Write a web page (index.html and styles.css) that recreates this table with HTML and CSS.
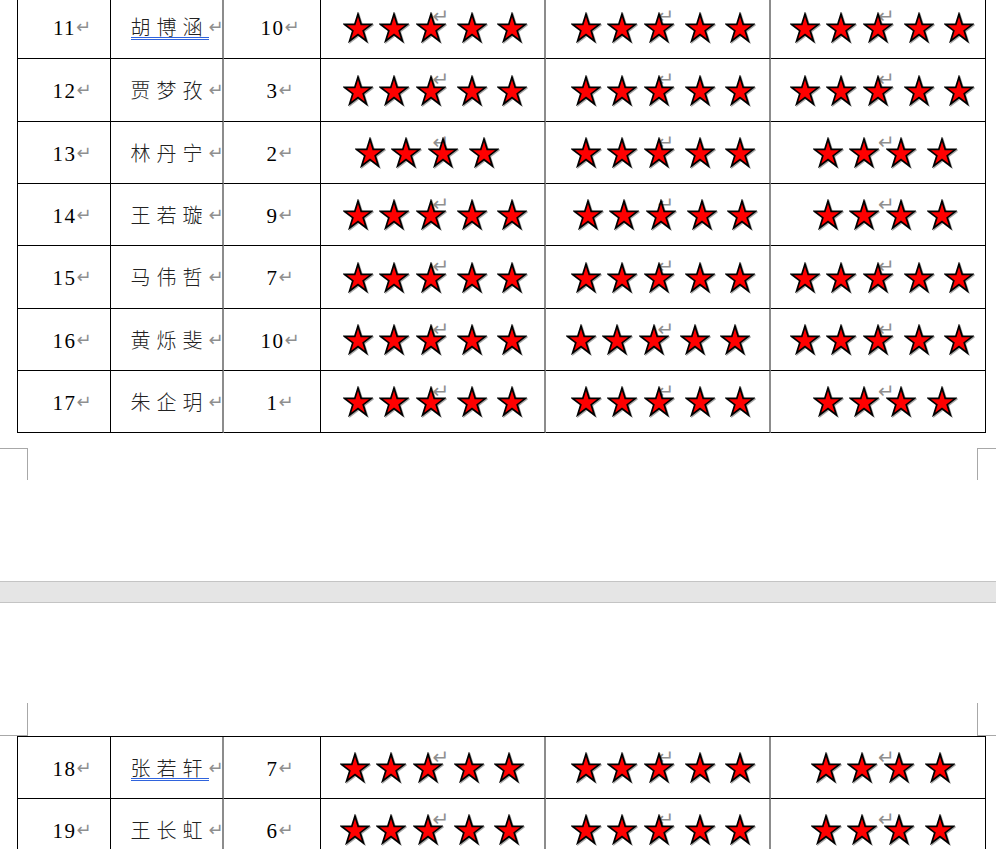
FILE: index.html
```html
<!DOCTYPE html>
<html lang="zh-CN">
<head>
  <meta charset="UTF-8">
  <meta name="viewport" content="width=device-width, initial-scale=1.0">
  <title>评分表</title>
  <link rel="stylesheet" href="styles.css">
</head>
<body>
  <svg class="defs" aria-hidden="true">
    <symbol id="st" viewBox="0 0 30 31">
      <polygon points="15,2 18.2,12.3 28.5,12.3 20.2,18.7 23.4,29 15,22.6 6.6,29 9.8,18.7 1.5,12.3 11.8,12.3" fill="#ff0000" stroke="#000" stroke-width="1.7" stroke-linejoin="miter"/>
    </symbol>
  </svg>

  <div class="sheet p1">
    <!-- 11 -->
    <div class="cell tn"><span class="num">11</span><span class="pm">↵</span></div>
    <div class="cell g tm"><span class="name u">胡博涵</span><span class="pm">↵</span></div>
    <div class="cell tn"><span class="num">10</span><span class="pm">↵</span></div>
    <div class="cell g sc c4"><span class="pm top">↵</span><div class="stars"><svg class="star"><use href="#st"/></svg><svg class="star"><use href="#st"/></svg><svg class="star"><use href="#st"/></svg><svg class="star"><use href="#st"/></svg><svg class="star"><use href="#st"/></svg></div></div>
    <div class="cell g sc c5"><span class="pm top">↵</span><div class="stars"><svg class="star"><use href="#st"/></svg><svg class="star"><use href="#st"/></svg><svg class="star"><use href="#st"/></svg><svg class="star"><use href="#st"/></svg><svg class="star"><use href="#st"/></svg></div></div>
    <div class="cell sc c6"><span class="pm top">↵</span><div class="stars"><svg class="star"><use href="#st"/></svg><svg class="star"><use href="#st"/></svg><svg class="star"><use href="#st"/></svg><svg class="star"><use href="#st"/></svg><svg class="star"><use href="#st"/></svg></div></div>
    <!-- 12 -->
    <div class="cell tn"><span class="num">12</span><span class="pm">↵</span></div>
    <div class="cell g tm"><span class="name">贾梦孜</span><span class="pm">↵</span></div>
    <div class="cell tn"><span class="num">3</span><span class="pm">↵</span></div>
    <div class="cell g sc c4"><span class="pm top">↵</span><div class="stars"><svg class="star"><use href="#st"/></svg><svg class="star"><use href="#st"/></svg><svg class="star"><use href="#st"/></svg><svg class="star"><use href="#st"/></svg><svg class="star"><use href="#st"/></svg></div></div>
    <div class="cell g sc c5"><span class="pm top">↵</span><div class="stars"><svg class="star"><use href="#st"/></svg><svg class="star"><use href="#st"/></svg><svg class="star"><use href="#st"/></svg><svg class="star"><use href="#st"/></svg><svg class="star"><use href="#st"/></svg></div></div>
    <div class="cell sc c6"><span class="pm top">↵</span><div class="stars"><svg class="star"><use href="#st"/></svg><svg class="star"><use href="#st"/></svg><svg class="star"><use href="#st"/></svg><svg class="star"><use href="#st"/></svg><svg class="star"><use href="#st"/></svg></div></div>
    <!-- 13 -->
    <div class="cell tn"><span class="num">13</span><span class="pm">↵</span></div>
    <div class="cell g tm"><span class="name">林丹宁</span><span class="pm">↵</span></div>
    <div class="cell tn"><span class="num">2</span><span class="pm">↵</span></div>
    <div class="cell g sc c4"><span class="pm top">↵</span><div class="stars four"><svg class="star"><use href="#st"/></svg><svg class="star"><use href="#st"/></svg><svg class="star"><use href="#st"/></svg><svg class="star"><use href="#st"/></svg></div></div>
    <div class="cell g sc c5"><span class="pm top">↵</span><div class="stars"><svg class="star"><use href="#st"/></svg><svg class="star"><use href="#st"/></svg><svg class="star"><use href="#st"/></svg><svg class="star"><use href="#st"/></svg><svg class="star"><use href="#st"/></svg></div></div>
    <div class="cell sc c6"><span class="pm top">↵</span><div class="stars four"><svg class="star"><use href="#st"/></svg><svg class="star"><use href="#st"/></svg><svg class="star"><use href="#st"/></svg><svg class="star"><use href="#st"/></svg></div></div>
    <!-- 14 -->
    <div class="cell tn"><span class="num">14</span><span class="pm">↵</span></div>
    <div class="cell g tm"><span class="name">王若璇</span><span class="pm">↵</span></div>
    <div class="cell tn"><span class="num">9</span><span class="pm">↵</span></div>
    <div class="cell g sc c4"><span class="pm top">↵</span><div class="stars"><svg class="star"><use href="#st"/></svg><svg class="star"><use href="#st"/></svg><svg class="star"><use href="#st"/></svg><svg class="star"><use href="#st"/></svg><svg class="star"><use href="#st"/></svg></div></div>
    <div class="cell g sc c5"><span class="pm top">↵</span><div class="stars pl27"><svg class="star"><use href="#st"/></svg><svg class="star"><use href="#st"/></svg><svg class="star"><use href="#st"/></svg><svg class="star"><use href="#st"/></svg><svg class="star"><use href="#st"/></svg></div></div>
    <div class="cell sc c6"><span class="pm top">↵</span><div class="stars four"><svg class="star"><use href="#st"/></svg><svg class="star"><use href="#st"/></svg><svg class="star"><use href="#st"/></svg><svg class="star"><use href="#st"/></svg></div></div>
    <!-- 15 -->
    <div class="cell tn"><span class="num">15</span><span class="pm">↵</span></div>
    <div class="cell g tm"><span class="name">马伟哲</span><span class="pm">↵</span></div>
    <div class="cell tn"><span class="num">7</span><span class="pm">↵</span></div>
    <div class="cell g sc c4"><span class="pm top">↵</span><div class="stars"><svg class="star"><use href="#st"/></svg><svg class="star"><use href="#st"/></svg><svg class="star"><use href="#st"/></svg><svg class="star"><use href="#st"/></svg><svg class="star"><use href="#st"/></svg></div></div>
    <div class="cell g sc c5"><span class="pm top">↵</span><div class="stars"><svg class="star"><use href="#st"/></svg><svg class="star"><use href="#st"/></svg><svg class="star"><use href="#st"/></svg><svg class="star"><use href="#st"/></svg><svg class="star"><use href="#st"/></svg></div></div>
    <div class="cell sc c6"><span class="pm top">↵</span><div class="stars"><svg class="star"><use href="#st"/></svg><svg class="star"><use href="#st"/></svg><svg class="star"><use href="#st"/></svg><svg class="star"><use href="#st"/></svg><svg class="star"><use href="#st"/></svg></div></div>
    <!-- 16 -->
    <div class="cell tn"><span class="num">16</span><span class="pm">↵</span></div>
    <div class="cell g tm"><span class="name">黄烁斐</span><span class="pm">↵</span></div>
    <div class="cell tn"><span class="num">10</span><span class="pm">↵</span></div>
    <div class="cell g sc c4"><span class="pm top">↵</span><div class="stars"><svg class="star"><use href="#st"/></svg><svg class="star"><use href="#st"/></svg><svg class="star"><use href="#st"/></svg><svg class="star"><use href="#st"/></svg><svg class="star"><use href="#st"/></svg></div></div>
    <div class="cell g sc c5"><span class="pm top">↵</span><div class="stars pl20"><svg class="star"><use href="#st"/></svg><svg class="star"><use href="#st"/></svg><svg class="star"><use href="#st"/></svg><svg class="star"><use href="#st"/></svg><svg class="star"><use href="#st"/></svg></div></div>
    <div class="cell sc c6"><span class="pm top">↵</span><div class="stars"><svg class="star"><use href="#st"/></svg><svg class="star"><use href="#st"/></svg><svg class="star"><use href="#st"/></svg><svg class="star"><use href="#st"/></svg><svg class="star"><use href="#st"/></svg></div></div>
    <!-- 17 -->
    <div class="cell tn"><span class="num">17</span><span class="pm">↵</span></div>
    <div class="cell g tm"><span class="name">朱企玥</span><span class="pm">↵</span></div>
    <div class="cell tn"><span class="num">1</span><span class="pm">↵</span></div>
    <div class="cell g sc c4"><span class="pm top">↵</span><div class="stars"><svg class="star"><use href="#st"/></svg><svg class="star"><use href="#st"/></svg><svg class="star"><use href="#st"/></svg><svg class="star"><use href="#st"/></svg><svg class="star"><use href="#st"/></svg></div></div>
    <div class="cell g sc c5"><span class="pm top">↵</span><div class="stars"><svg class="star"><use href="#st"/></svg><svg class="star"><use href="#st"/></svg><svg class="star"><use href="#st"/></svg><svg class="star"><use href="#st"/></svg><svg class="star"><use href="#st"/></svg></div></div>
    <div class="cell sc c6"><span class="pm top">↵</span><div class="stars four"><svg class="star"><use href="#st"/></svg><svg class="star"><use href="#st"/></svg><svg class="star"><use href="#st"/></svg><svg class="star"><use href="#st"/></svg></div></div>
  </div>

  <div class="marks end"><div class="mk l"></div><div class="mk r"></div></div>
  <div class="page-gap"></div>
  <div class="marks start"><div class="mk l"></div><div class="mk r"></div></div>

  <div class="sheet p2">
    <!-- 18 -->
    <div class="cell tn"><span class="num">18</span><span class="pm">↵</span></div>
    <div class="cell g tm"><span class="name u">张若轩</span><span class="pm">↵</span></div>
    <div class="cell tn"><span class="num">7</span><span class="pm">↵</span></div>
    <div class="cell g sc c4"><span class="pm top">↵</span><div class="stars pl19"><svg class="star"><use href="#st"/></svg><svg class="star"><use href="#st"/></svg><svg class="star"><use href="#st"/></svg><svg class="star"><use href="#st"/></svg><svg class="star"><use href="#st"/></svg></div></div>
    <div class="cell g sc c5"><span class="pm top">↵</span><div class="stars"><svg class="star"><use href="#st"/></svg><svg class="star"><use href="#st"/></svg><svg class="star"><use href="#st"/></svg><svg class="star"><use href="#st"/></svg><svg class="star"><use href="#st"/></svg></div></div>
    <div class="cell sc c6"><span class="pm top">↵</span><div class="stars four pl40"><svg class="star"><use href="#st"/></svg><svg class="star"><use href="#st"/></svg><svg class="star"><use href="#st"/></svg><svg class="star"><use href="#st"/></svg></div></div>
    <!-- 19 -->
    <div class="cell tn"><span class="num">19</span><span class="pm">↵</span></div>
    <div class="cell g tm"><span class="name">王长虹</span><span class="pm">↵</span></div>
    <div class="cell tn"><span class="num">6</span><span class="pm">↵</span></div>
    <div class="cell g sc c4"><span class="pm top">↵</span><div class="stars pl19"><svg class="star"><use href="#st"/></svg><svg class="star"><use href="#st"/></svg><svg class="star"><use href="#st"/></svg><svg class="star"><use href="#st"/></svg><svg class="star"><use href="#st"/></svg></div></div>
    <div class="cell g sc c5"><span class="pm top">↵</span><div class="stars"><svg class="star"><use href="#st"/></svg><svg class="star"><use href="#st"/></svg><svg class="star"><use href="#st"/></svg><svg class="star"><use href="#st"/></svg><svg class="star"><use href="#st"/></svg></div></div>
    <div class="cell sc c6"><span class="pm top">↵</span><div class="stars four pl40"><svg class="star"><use href="#st"/></svg><svg class="star"><use href="#st"/></svg><svg class="star"><use href="#st"/></svg><svg class="star"><use href="#st"/></svg></div></div>
  </div>
</body>
</html>
```

FILE: styles.css
```css
*{box-sizing:border-box;margin:0;padding:0}
html,body{background:#fff}
body{width:996px;height:849px;overflow:hidden;font-family:"Liberation Serif","Noto Sans CJK SC",serif;color:#000}
.defs{position:absolute;width:0;height:0;overflow:hidden}

/* table */
.sheet{display:grid;grid-template-columns:93px 113px 97px 225px 225px 215px;width:969px;margin-left:17px;border-left:1px solid #000;border-top:1px solid #000}
.p1{margin-top:-5px;grid-template-rows:63px 63px 62px 62px 63px 62px 62px}
.p2{grid-template-rows:62px 62px}
.cell{position:relative;display:flex;align-items:center;justify-content:center;border-right:1px solid #000;border-bottom:1px solid #000;white-space:nowrap}
.cell.g{border-right:2px solid #8c8c8c}

/* spacer keeps the text centred without the return mark */
.tn::before,.tm::before{content:"";flex-shrink:0}
.tn::before{width:16px}
.tm::before{width:19px}

.num{font-size:21px;letter-spacing:1.5px;line-height:22px;padding-top:2px}
.name{flex-shrink:0;font-family:"Noto Sans CJK SC",sans-serif;font-weight:300;font-size:20px;letter-spacing:6px;line-height:24px;color:#222}
.name.u{border-bottom:3px double #2f63dc;line-height:21px;padding-top:2px}
.pm{display:inline-block;width:15px;flex-shrink:0;font-family:"DejaVu Sans",sans-serif;font-size:18px;line-height:18px;color:#8f8f8f}
.tm .pm{width:13px}
.pm.top{position:absolute;left:50%;top:10px;font-size:20px;line-height:20px}

/* stars */
.sc{justify-content:flex-start}
.stars{position:relative;z-index:1;display:flex;align-items:center}
.c4 .stars{padding-left:22px}
.c5 .stars{padding-left:25px}
.c6 .stars{padding-left:19px}
.c4 .stars.four{padding-left:34px}
.c6 .stars.four{padding-left:42px}
.c4 .stars.pl19{padding-left:19px}
.c5 .stars.pl20{padding-left:20px}
.c5 .stars.pl27{padding-left:27px}
.c6 .stars.pl40{padding-left:40px}
.star{width:30px;height:31px;flex-shrink:0;filter:drop-shadow(1px 1px 0.6px rgba(0,0,0,.35))}
.star:nth-child(2){margin-left:6px}
.star:nth-child(3){margin-left:7px}
.star:nth-child(4){margin-left:11px}
.star:nth-child(5){margin-left:10px}

/* page break */
.marks{display:flex;justify-content:space-between}
.mk.l{width:28px;border-right:1px solid #a8a8a8}
.mk.r{width:19px;border-left:1px solid #a8a8a8}
.marks.end{margin-top:15px;height:32px}
.marks.end .mk{border-top:1px solid #a8a8a8}
.marks.start{margin-top:100px;height:33px}
.marks.start .mk{border-bottom:1px solid #a8a8a8}
.page-gap{margin-top:101px;height:22px;background:#e5e5e5;border-top:1px solid #c4c4c4;border-bottom:1px solid #c4c4c4}
```
